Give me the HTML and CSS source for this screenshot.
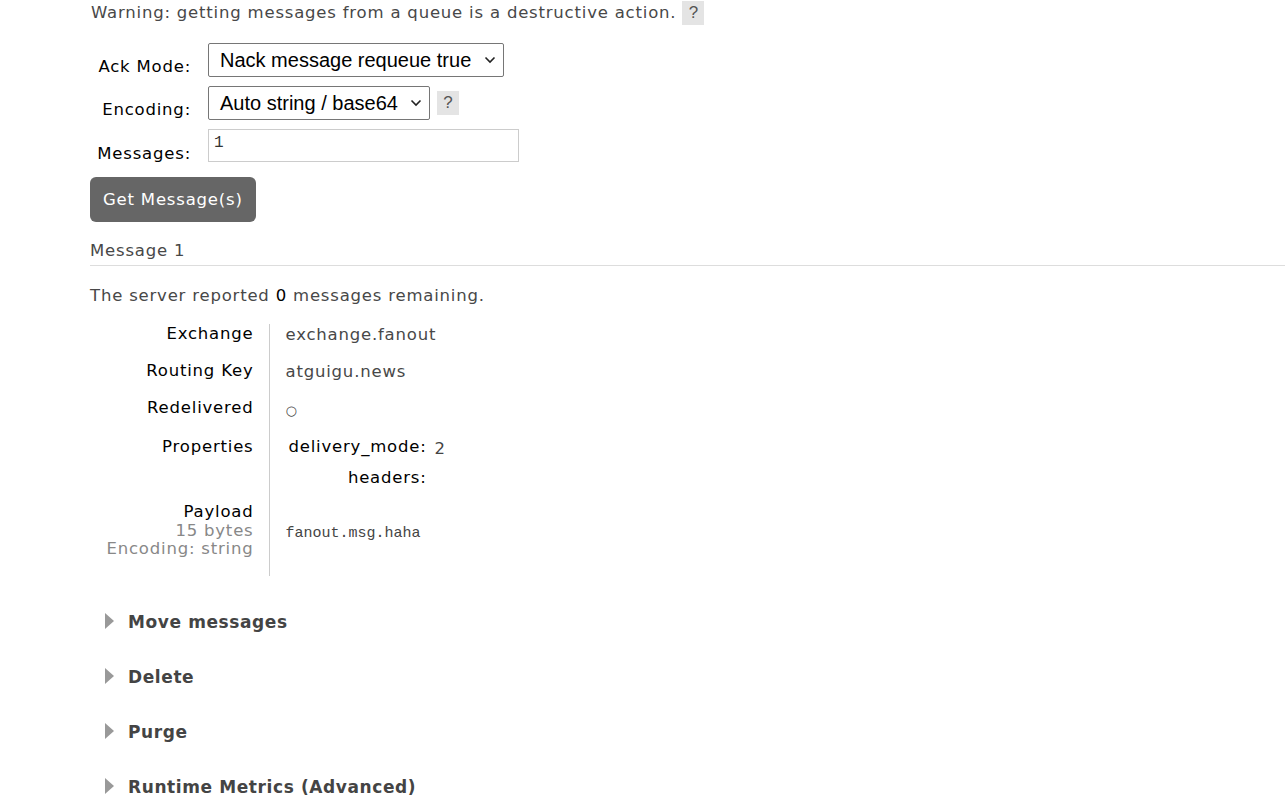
FILE: index.html
```html
<!DOCTYPE html>
<html>
<head>
<meta charset="utf-8">
<link rel="stylesheet" href="styles.css">
</head>
<body>
<div class="page">
  <p class="warning">Warning: getting messages from a queue is a destructive action. <span class="help">?</span></p>
  <table class="form">
    <tr>
      <th>Ack Mode:</th>
      <td><div class="select sel-ack">Nack message requeue true<svg class="chev" viewBox="0 0 12 8"><path d="M1.5 1.5 L6 6 L10.5 1.5" fill="none" stroke="#222" stroke-width="1.6"/></svg></div></td>
    </tr>
    <tr>
      <th>Encoding:</th>
      <td><div class="select sel-enc">Auto string / base64<svg class="chev" viewBox="0 0 12 8"><path d="M1.5 1.5 L6 6 L10.5 1.5" fill="none" stroke="#222" stroke-width="1.6"/></svg></div><span class="help help2">?</span></td>
    </tr>
    <tr>
      <th>Messages:</th>
      <td><div class="input">1</div></td>
    </tr>
  </table>
  <div class="button">Get Message(s)</div>
  <h3 class="msg-head">Message 1</h3>
  <p class="remaining">The server reported <b>0</b> messages remaining.</p>
  <table class="facts">
    <tr><th>Exchange</th><td>exchange.fanout</td></tr>
    <tr><th>Routing Key</th><td>atguigu.news</td></tr>
    <tr><th>Redelivered</th><td><span class="circle">○</span></td></tr>
    <tr class="proprow"><th>Properties</th><td>
      <table class="props">
        <tr><th>delivery_mode:</th><td>2</td></tr>
        <tr><th>headers:</th><td></td></tr>
      </table>
    </td></tr>
    <tr class="payload"><th>Payload<div class="sub">15 bytes</div><div class="sub">Encoding: string</div></th><td><pre>fanout.msg.haha</pre></td></tr>
  </table>
  <div class="sections">
    <div class="section"><span class="tri"></span>Move messages</div>
    <div class="section"><span class="tri"></span>Delete</div>
    <div class="section"><span class="tri"></span>Purge</div>
    <div class="section"><span class="tri"></span>Runtime Metrics (Advanced)</div>
  </div>
</div>
</body>
</html>
```
FILE: styles.css
```css
html, body { margin: 0; padding: 0; background: #fff; }
body { font-family: "DejaVu Sans", Verdana, sans-serif; font-size: 16.5px; letter-spacing: 0.8px; color: #484848; }
.page { padding-left: 91px; }
.warning { margin: 0; padding-top: 1px; height: 42px; line-height: 20px; }
.help { display: inline-block; background: #e4e4e4; color: #555; width: 22px; height: 24px; line-height: 24px; text-align: center; vertical-align: middle; font-family: "Liberation Sans", Arial, sans-serif; font-size: 17px; letter-spacing: 0; margin-left: 0; }
.form { border-collapse: collapse; }
.form th { font-weight: normal; color: #000; text-align: right; padding: 4px 17px 0 0; width: 117px; box-sizing: border-box; vertical-align: middle; white-space: nowrap; }
.form td { padding: 0 0 9px 0; vertical-align: middle; white-space: nowrap; }
.form tr:last-child th { padding-top: 6px; }
.select { display: inline-flex; align-items: center; justify-content: space-between; box-sizing: border-box; border: 1px solid #767676; border-radius: 2px; height: 34px; padding: 0 7px 0 11px; font-family: "Liberation Sans", Arial, sans-serif; font-size: 20px; letter-spacing: 0; color: #000; vertical-align: middle; }
.sel-ack { width: 296px; }
.sel-enc { width: 222px; }
.chev { width: 12px; height: 8px; margin-left: 8px; }
.help2 { margin-left: 7px; }
.input { box-sizing: border-box; width: 311px; height: 33px; border: 1px solid #ccc; font-family: "Liberation Mono", monospace; font-size: 16px; letter-spacing: 0; color: #333; padding: 4px 5px; }
.button { display: inline-block; background: #666; color: #fff; border-radius: 6px; padding: 0 13px; height: 45px; line-height: 45px; margin-left: -1px; margin-top: 6px; font-size: 16.5px; letter-spacing: 0.8px; }
.msg-head { font-weight: normal; font-size: 16.5px; margin: 19px 0 0 -1px; line-height: 20px; padding-bottom: 4px; border-bottom: 1px solid #ddd; color: #484848; }
.remaining { margin: 20px 0 0 -1px; line-height: 20px; }
.remaining b { font-weight: normal; color: #000; }
.facts { border-collapse: collapse; margin-top: 18px; }
.facts > tbody > tr > th { font-weight: normal; color: #000; text-align: right; width: 178px; padding: 0 15px 0 0; border-right: 1px solid #ccc; vertical-align: top; height: 37px; box-sizing: border-box; line-height: 20px; white-space: nowrap; }
.facts > tbody > tr > td { padding: 1px 0 0 16px; vertical-align: top; line-height: 20px; white-space: nowrap; }
.circle { font-family: "DejaVu Sans", sans-serif; font-size: 13px; position: relative; top: 1px; color: #444; letter-spacing: 0; }
.facts > tbody > tr.proprow > th { padding-top: 2px; }
.facts > tbody > tr.proprow > td { padding-top: 2px; }
.props { border-collapse: collapse; margin-left: 3px; }
.props th { font-weight: normal; color: #000; text-align: right; padding: 0 8px 0 0; height: 31px; vertical-align: top; line-height: 20px; }
.props td { padding: 0; vertical-align: top; line-height: 23px; color: #444; }
.facts > tbody > tr.payload > th { padding-top: 4px; padding-bottom: 17px; line-height: 18.5px; }
.sub { color: #888; }
.facts > tbody > tr.payload > td { padding-top: 25px; }
pre { margin: 0; font-family: "Liberation Mono", monospace; font-size: 15px; letter-spacing: 0; color: #444; }
.sections { margin-top: 34px; }
.section { font-weight: bold; color: #444; font-size: 17px; letter-spacing: 0.6px; height: 55px; line-height: 24px; display: flex; align-items: flex-start; margin-left: 14px; }
.tri { width: 0; height: 0; border-left: 9px solid #999; border-top: 8px solid transparent; border-bottom: 8px solid transparent; margin-right: 14px; margin-top: 3px; }
```
